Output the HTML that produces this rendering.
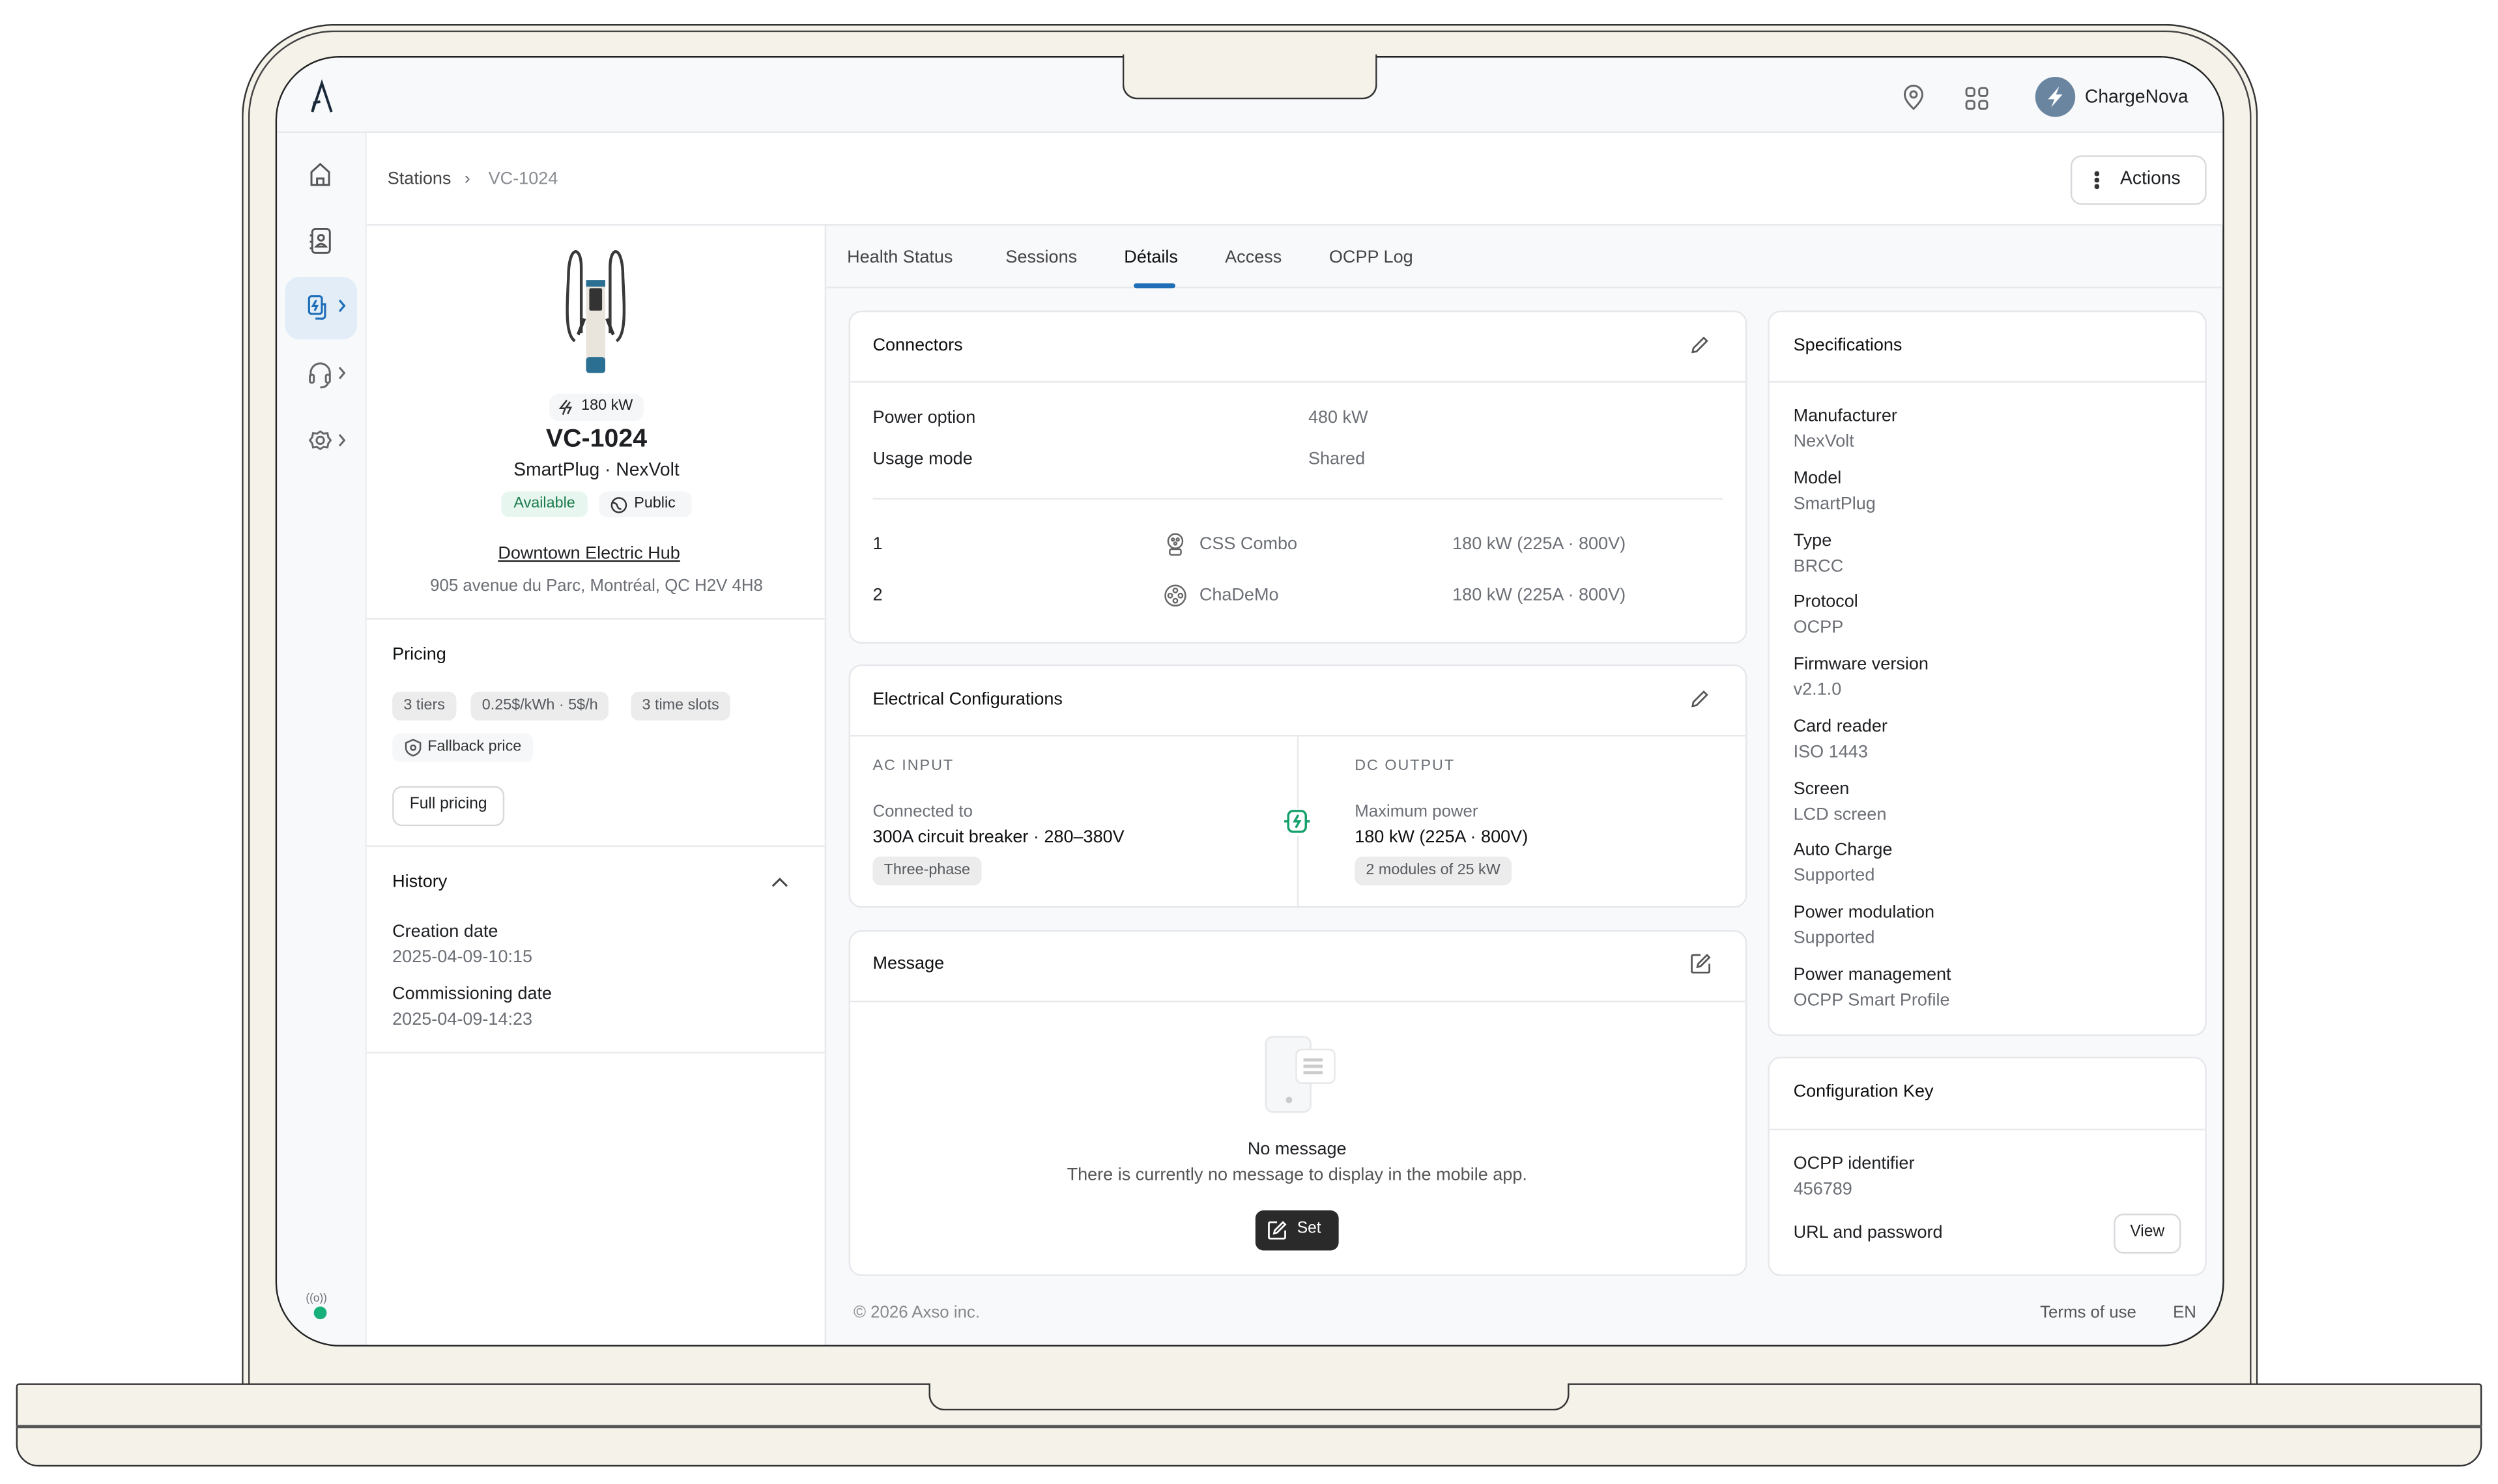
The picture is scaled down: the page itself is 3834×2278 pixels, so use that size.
<!DOCTYPE html>
<html><head><meta charset="utf-8"><style>
*{box-sizing:border-box;margin:0;padding:0}
html,body{width:3834px;height:2278px;background:#fff;overflow:hidden}
#c{position:absolute;left:0;top:0;width:1560px;height:927px;transform:scale(2.4577);transform-origin:0 0;font-family:"Liberation Sans",sans-serif;color:#1d1f22}
.a{position:absolute}
.t{position:absolute;white-space:nowrap;line-height:14px;font-size:11px}
.g{color:#6b6f75}
.m{font-weight:400;color:#0e0f11}
.card{position:absolute;background:#fff;border:1px solid #e6e7ea;border-radius:8px}
.hl{position:absolute;height:1px;background:#e8e9ec}
.vl{position:absolute;width:1px;background:#e8e9ec}
.chip{position:absolute;height:18px;line-height:18px;font-size:9.5px;padding:0 7px;border-radius:5px;background:#ececec;color:#55595e;white-space:nowrap}
svg{position:absolute;overflow:visible}
</style></head><body><div id="c">
<div class="a" style="left:151px;top:15px;width:1259px;height:860px;background:#f5f2ea;border:1.3px solid #333;border-bottom:none;border-radius:58px 58px 0 0"></div>
<div class="a" style="left:155px;top:19px;width:1251px;height:856px;border:1px solid #444;border-bottom:none;border-radius:54px 54px 0 0"></div>
<div class="a" style="left:10px;top:864px;width:1540px;height:52px;background:#f5f2ea;border:1.2px solid #333;border-radius:2px 2px 14px 14px"></div>
<div class="a" style="left:10px;top:890px;width:1540px;height:1.5px;background:#555"></div>
<div class="a" style="left:580px;top:864px;width:400px;height:17px;border:1px solid #333;border-top:none;border-radius:0 0 10px 10px;background:#f5f2ea"></div>
<div class="a" style="left:172px;top:35px;width:1217px;height:806px;border:1.2px solid #222;border-radius:40px;overflow:hidden;background:#f8f9fb">
 <div class="a" style="left:0;top:0;width:1217px;height:806px;transform:translate(-172px,-35px)">
  <div class="a" style="left:172px;top:35px;width:1217px;height:47px;background:#f8f9fb;border-bottom:1px solid #e8e9ec"></div>
  <svg style="left:192px;top:49px" width="16" height="22" viewBox="0 0 16 22"><path d="M2 20 L8 2 L14 20 M2 20 L3.5 14 L7 13.5" fill="none" stroke="#1b2a3a" stroke-width="1.6"/></svg>
  <svg style="left:1187px;top:52px" width="14" height="16" viewBox="0 0 14 16"><path d="M7 15 C3 11 1.5 8.5 1.5 6 A5.5 5.5 0 0 1 12.5 6 C12.5 8.5 11 11 7 15Z" fill="none" stroke="#666" stroke-width="1.2"/><circle cx="7" cy="6" r="2" fill="none" stroke="#666" stroke-width="1.2"/></svg>
  <svg style="left:1226px;top:53px" width="15" height="15" viewBox="0 0 15 15" fill="none" stroke="#666" stroke-width="1.2"><rect x="1" y="1" width="5" height="5" rx="1.5"/><rect x="9" y="1" width="5" height="5" rx="1.5"/><rect x="1" y="9" width="5" height="5" rx="1.5"/><rect x="9" y="9" width="5" height="5" rx="1.5"/></svg>
  <div class="a" style="left:1270px;top:47px;width:25px;height:25px;border-radius:50%;background:#6a85a0"></div>
  <svg style="left:1274px;top:51px" width="17" height="17" viewBox="0 0 17 17"><path d="M11 2 L4 10 L8 10 L6 15 L13 7 L9 7 Z" fill="#fff"/></svg>
  <div class="t" style="left:1301px;top:53px;font-size:11.5px">ChargeNova</div>
  <div class="a" style="left:172px;top:82px;width:56px;height:760px;background:#f8f9fb;border-right:1px solid #eceef0"></div>
  <svg style="left:192px;top:100px" width="14" height="16" viewBox="0 0 14 16" fill="none" stroke="#555" stroke-width="1.2"><path d="M1.5 14.5 V6.5 L7 1.5 L12.5 6.5 V14.5 Z"/><path d="M5 14.5 V10.5 H9 V14.5"/></svg>
  <svg style="left:192px;top:141px" width="14" height="17" viewBox="0 0 14 17" fill="none" stroke="#555" stroke-width="1.2"><rect x="2" y="1" width="11" height="15" rx="2"/><circle cx="7.5" cy="6.5" r="1.8"/><path d="M4.5 12 Q7.5 8.5 10.5 12Z"/><path d="M0.5 5h2M0.5 9h2M0.5 13h2"/></svg>
  <div class="a" style="left:177px;top:172px;width:45px;height:39px;border-radius:9px;background:#e3edf8"></div>
  <svg style="left:191px;top:183px" width="28" height="17" viewBox="0 0 28 17" fill="none" stroke="#1f6fb8" stroke-width="1.3"><rect x="1" y="1" width="8" height="11" rx="1.5"/><path d="M5.5 3.5 L3.5 7 H6 L4.5 10"/><path d="M9 6 H11 V13 Q11 15.5 8 15 H5"/><path d="M20 3.5 L23 7 L20 10.5"/></svg>
  <svg style="left:191px;top:225px" width="28" height="17" viewBox="0 0 28 17" fill="none" stroke="#666" stroke-width="1.2"><path d="M2 9 V7 A6 6 0 0 1 14 7 V9"/><rect x="1.5" y="8" width="2.5" height="5" rx="1"/><rect x="11.5" y="8" width="2.5" height="5" rx="1"/><path d="M13 13 Q12 16 8 16"/><path d="M20 3.5 L23 7 L20 10.5"/></svg>
  <svg style="left:191px;top:267px" width="28" height="17" viewBox="0 0 28 17" fill="none" stroke="#666" stroke-width="1.2"><path d="M8 1.5 L10 2.8 L12.5 2.5 L13 5 L14.5 7 L13 9 L12.5 11.5 L10 11.2 L8 12.5 L6 11.2 L3.5 11.5 L3 9 L1.5 7 L3 5 L3.5 2.5 L6 2.8Z"/><circle cx="8" cy="7" r="2.3"/><path d="M20 3.5 L23 7 L20 10.5"/></svg>
  <div class="t g" style="left:190px;top:804px;font-size:7px">((o))</div>
  <div class="a" style="left:195px;top:815px;width:8px;height:8px;border-radius:50%;background:#17b07a"></div>
  <div class="a" style="left:228px;top:82px;width:1161px;height:58px;background:#fff;border-bottom:1px solid #e8e9ec"></div>
  <div class="t" style="left:241px;top:104px;color:#444">Stations</div>
  <div class="t g" style="left:289px;top:104px">›</div>
  <div class="t" style="left:304px;top:104px;color:#8a8d92">VC-1024</div>
  <div class="a" style="left:1292px;top:96px;width:85px;height:31px;border:1px solid #d8d9dc;border-radius:7px;background:#fff"></div>
  <div class="a" style="left:1307px;top:106px;width:2.5px;height:2.5px;border-radius:50%;background:#333;box-shadow:0 4px 0 #333,0 8px 0 #333"></div>
  <div class="t" style="left:1323px;top:104px;font-size:11.5px">Actions</div>
  <div class="a" style="left:228px;top:140px;width:287px;height:702px;background:#fff;border-right:1px solid #e8e9ec"></div>
  <svg style="left:350px;top:152px" width="42" height="82" viewBox="0 0 42 82"><path d="M8 60 C2 56 3 40 4 20 C4 0 12 0 12 14 L12 55" fill="none" stroke="#3a3a3a" stroke-width="1.8"/><path d="M34 60 C40 56 39 40 38 20 C38 0 30 0 30 14 L30 55" fill="none" stroke="#3a3a3a" stroke-width="1.8"/><rect x="15" y="22" width="12" height="55" rx="3" fill="#e9e4dc"/><rect x="15" y="22" width="12" height="4" fill="#2b6f93"/><rect x="17" y="27" width="8" height="14" rx="1" fill="#333"/><rect x="15" y="70" width="12" height="10" rx="2" fill="#2b6f93"/><path d="M14 46 L10 56 M28 46 L32 56" stroke="#333" stroke-width="2"/></svg>
  <div class="a" style="left:342px;top:245px;width:59px;height:17px;border-radius:6px;background:#f5f6f8"></div>
  <svg style="left:347px;top:248px" width="11" height="11" viewBox="0 0 11 11" fill="none" stroke="#333" stroke-width="1"><path d="M6 1 L2 6 H5 L3.5 10 M8 2 L5.5 5.5 H8.5 L6.5 9.5"/></svg>
  <div class="t" style="left:362px;top:246px;font-size:9.5px">180 kW</div>
  <div class="t" style="left:300px;top:265px;width:143px;text-align:center;font-size:16px;line-height:18px;font-weight:600">VC-1024</div>
  <div class="t" style="left:290px;top:286px;width:163px;text-align:center;font-size:11.5px">SmartPlug · NexVolt</div>
  <div class="a" style="left:312px;top:306px;width:54px;height:16px;border-radius:5px;background:#e7f7ef"></div>
  <div class="t" style="left:312px;top:307px;width:54px;text-align:center;font-size:9.5px;color:#1a7a4a">Available</div>
  <div class="a" style="left:373px;top:306px;width:58px;height:16px;border-radius:5px;background:#f5f6f8"></div>
  <svg style="left:380px;top:309px" width="11" height="11" viewBox="0 0 11 11" fill="none" stroke="#333" stroke-width="1"><circle cx="5.5" cy="5.5" r="4.5"/><path d="M1.5 4 Q4 4 4.5 6 Q5 8 7 8"/></svg>
  <div class="t" style="left:395px;top:307px;font-size:9.5px">Public</div>
  <div class="t" style="left:310px;top:338px;font-size:11px;text-decoration:underline">Downtown Electric Hub</div>
  <div class="t g" style="left:250px;top:358px;width:243px;text-align:center;font-size:10.5px">905 avenue du Parc, Montréal, QC H2V 4H8</div>
  <div class="hl" style="left:228px;top:385px;width:287px"></div>
  <div class="t m" style="left:244px;top:401px;font-size:11px">Pricing</div>
  <div class="chip" style="left:244px;top:431px">3 tiers</div>
  <div class="chip" style="left:293px;top:431px">0.25$/kWh · 5$/h</div>
  <div class="chip" style="left:393px;top:431px">3 time slots</div>
  <div class="chip" style="left:244px;top:457px;background:#f6f7f8;color:#333;padding-left:22px">Fallback price</div>
  <svg style="left:251px;top:460px" width="12" height="12" viewBox="0 0 12 12" fill="none" stroke="#555" stroke-width="1"><path d="M6 1 L10.5 3 V6 Q10.5 9.5 6 11 Q1.5 9.5 1.5 6 V3Z"/><circle cx="6" cy="6" r="1.5"/></svg>
  <div class="a" style="left:244px;top:490px;width:70px;height:25px;border:1px solid #d8d9dc;border-radius:6px"></div>
  <div class="t" style="left:244px;top:495px;width:70px;text-align:center;font-size:10px">Full pricing</div>
  <div class="hl" style="left:228px;top:527px;width:287px"></div>
  <div class="t m" style="left:244px;top:543px;font-size:11px">History</div>
  <svg style="left:480px;top:546px" width="12" height="8" viewBox="0 0 12 8"><path d="M1.5 6.5 L6 2 L10.5 6.5" fill="none" stroke="#444" stroke-width="1.2"/></svg>
  <div class="t" style="left:244px;top:574px">Creation date</div>
  <div class="t g" style="left:244px;top:590px">2025-04-09-10:15</div>
  <div class="t" style="left:244px;top:613px">Commissioning date</div>
  <div class="t g" style="left:244px;top:629px">2025-04-09-14:23</div>
  <div class="hl" style="left:228px;top:656px;width:287px"></div>
  <div class="a" style="left:515px;top:178px;width:874px;height:1px;background:#e8e9ec"></div>
  <div class="t" style="left:528px;top:153px;color:#444">Health Status</div>
  <div class="t" style="left:627px;top:153px;color:#444">Sessions</div>
  <div class="t m" style="left:701px;top:153px">Détails</div>
  <div class="a" style="left:707px;top:176px;width:26px;height:3px;border-radius:2px;background:#1f6fb8"></div>
  <div class="t" style="left:764px;top:153px;color:#444">Access</div>
  <div class="t" style="left:829px;top:153px;color:#444">OCPP Log</div>
  <div class="card" style="left:529px;top:193px;width:561px;height:208px"></div>
  <div class="t m" style="left:544px;top:208px">Connectors</div>
  <svg style="left:1054px;top:208px" width="13" height="13" viewBox="0 0 13 13" fill="none" stroke="#555" stroke-width="1.1"><path d="M2 11 L2.5 8.5 L9 2 L11 4 L4.5 10.5 Z"/></svg>
  <div class="hl" style="left:529px;top:237px;width:561px"></div>
  <div class="t" style="left:544px;top:253px">Power option</div><div class="t g" style="left:816px;top:253px">480 kW</div>
  <div class="t" style="left:544px;top:279px">Usage mode</div><div class="t g" style="left:816px;top:279px">Shared</div>
  <div class="hl" style="left:544px;top:310px;width:531px"></div>
  <div class="t" style="left:544px;top:332px">1</div>
  <svg style="left:727px;top:332px" width="12" height="14" viewBox="0 0 12 14" fill="none" stroke="#666" stroke-width="1"><circle cx="6" cy="5" r="4.5"/><rect x="2.5" y="10" width="7" height="3.5" rx="1"/><circle cx="4.5" cy="4" r=".8"/><circle cx="7.5" cy="4" r=".8"/><circle cx="6" cy="6.5" r=".8"/></svg>
  <div class="t g" style="left:748px;top:332px">CSS Combo</div><div class="t g" style="left:906px;top:332px">180 kW (225A · 800V)</div>
  <div class="t" style="left:544px;top:364px">2</div>
  <svg style="left:726px;top:364px" width="14" height="14" viewBox="0 0 14 14" fill="none" stroke="#666" stroke-width="1"><circle cx="7" cy="7" r="6.3"/><circle cx="7" cy="3.8" r="1.3"/><circle cx="7" cy="10.2" r="1.3"/><circle cx="3.8" cy="7" r="1.3"/><circle cx="10.2" cy="7" r="1.3"/></svg>
  <div class="t g" style="left:748px;top:364px">ChaDeMo</div><div class="t g" style="left:906px;top:364px">180 kW (225A · 800V)</div>
  <div class="card" style="left:529px;top:414px;width:561px;height:152px"></div>
  <div class="t m" style="left:544px;top:429px">Electrical Configurations</div>
  <svg style="left:1054px;top:429px" width="13" height="13" viewBox="0 0 13 13" fill="none" stroke="#555" stroke-width="1.1"><path d="M2 11 L2.5 8.5 L9 2 L11 4 L4.5 10.5 Z"/></svg>
  <div class="hl" style="left:529px;top:458px;width:561px"></div>
  <div class="vl" style="left:809px;top:459px;height:106px"></div>
  <div class="t g" style="left:544px;top:471px;font-size:9.5px;letter-spacing:.8px">AC INPUT</div>
  <div class="t g" style="left:845px;top:471px;font-size:9.5px;letter-spacing:.8px">DC OUTPUT</div>
  <div class="t g" style="left:544px;top:499px;font-size:10.5px">Connected to</div>
  <div class="t m" style="left:544px;top:515px">300A circuit breaker · 280–380V</div>
  <div class="chip" style="left:544px;top:534px;font-size:9.5px">Three-phase</div>
  <div class="t g" style="left:845px;top:499px;font-size:10.5px">Maximum power</div>
  <div class="t m" style="left:845px;top:515px">180 kW (225A · 800V)</div>
  <div class="chip" style="left:845px;top:534px;font-size:9.5px">2 modules of 25 kW</div>
  <div class="a" style="left:801px;top:504px;width:16px;height:17px;background:#fff"></div>
  <svg style="left:800px;top:503px" width="18" height="18" viewBox="0 0 18 18" fill="none" stroke="#13a06a" stroke-width="1.4"><rect x="3.5" y="2.5" width="11" height="13" rx="3"/><path d="M9.8 5 L7.5 9 H10.5 L8.2 13"/><path d="M1 9 H3.5 M14.5 9 H17"/></svg>
  <div class="card" style="left:529px;top:580px;width:561px;height:216px"></div>
  <div class="t m" style="left:544px;top:594px">Message</div>
  <svg style="left:1054px;top:594px" width="14" height="14" viewBox="0 0 14 14" fill="none" stroke="#555" stroke-width="1.1"><path d="M7 1.5 H2.5 Q1.5 1.5 1.5 2.5 V11.5 Q1.5 12.5 2.5 12.5 H11.5 Q12.5 12.5 12.5 11.5 V7"/><path d="M5 9 L5.5 7 L11 1.5 L12.5 3 L7 8.5 Z"/></svg>
  <div class="hl" style="left:529px;top:624px;width:561px"></div>
  <div class="a" style="left:789px;top:646px;width:29px;height:48px;border:1.5px solid #e6e7e9;border-radius:5px;background:#f6f7f8"></div>
  <div class="a" style="left:802px;top:684px;width:4px;height:4px;border-radius:50%;background:#c9cacc"></div>
  <div class="a" style="left:808px;top:654px;width:25px;height:22px;border:1.5px solid #e6e7e9;border-radius:4px;background:#fff"></div>
  <div class="a" style="left:813px;top:660px;width:12px;height:1.5px;background:#ccc;box-shadow:0 4px 0 #ccc,0 8px 0 #ccc"></div>
  <div class="t" style="left:729px;top:710px;width:160px;text-align:center;font-size:11px">No message</div>
  <div class="t g" style="left:609px;top:726px;width:400px;text-align:center;font-size:11px;color:#555">There is currently no message to display in the mobile app.</div>
  <div class="a" style="left:783px;top:755px;width:52px;height:25px;border-radius:5px;background:#2a2a2b"></div>
  <svg style="left:790px;top:761px" width="13" height="13" viewBox="0 0 14 14" fill="none" stroke="#fff" stroke-width="1.2"><path d="M7 1.5 H2.5 Q1.5 1.5 1.5 2.5 V11.5 Q1.5 12.5 2.5 12.5 H11.5 Q12.5 12.5 12.5 11.5 V7"/><path d="M5 9 L5.5 7 L11 1.5 L12.5 3 L7 8.5 Z"/></svg>
  <div class="t" style="left:809px;top:760px;color:#fff;font-size:10px">Set</div>
  <div class="card" style="left:1103px;top:193px;width:274px;height:453px"></div>
  <div class="t m" style="left:1119px;top:208px">Specifications</div>
  <div class="hl" style="left:1103px;top:237px;width:274px"></div>
  <div class="t" style="left:1119px;top:252px">Manufacturer</div><div class="t g" style="left:1119px;top:268px">NexVolt</div>
  <div class="t" style="left:1119px;top:291px">Model</div><div class="t g" style="left:1119px;top:307px">SmartPlug</div>
  <div class="t" style="left:1119px;top:330px">Type</div><div class="t g" style="left:1119px;top:346px">BRCC</div>
  <div class="t" style="left:1119px;top:368px">Protocol</div><div class="t g" style="left:1119px;top:384px">OCPP</div>
  <div class="t" style="left:1119px;top:407px">Firmware version</div><div class="t g" style="left:1119px;top:423px">v2.1.0</div>
  <div class="t" style="left:1119px;top:446px">Card reader</div><div class="t g" style="left:1119px;top:462px">ISO 1443</div>
  <div class="t" style="left:1119px;top:485px">Screen</div><div class="t g" style="left:1119px;top:501px">LCD screen</div>
  <div class="t" style="left:1119px;top:523px">Auto Charge</div><div class="t g" style="left:1119px;top:539px">Supported</div>
  <div class="t" style="left:1119px;top:562px">Power modulation</div><div class="t g" style="left:1119px;top:578px">Supported</div>
  <div class="t" style="left:1119px;top:601px">Power management</div><div class="t g" style="left:1119px;top:617px">OCPP Smart Profile</div>
  <div class="card" style="left:1103px;top:659px;width:274px;height:137px"></div>
  <div class="t m" style="left:1119px;top:674px">Configuration Key</div>
  <div class="hl" style="left:1103px;top:704px;width:274px"></div>
  <div class="t" style="left:1119px;top:719px">OCPP identifier</div><div class="t g" style="left:1119px;top:735px">456789</div>
  <div class="t" style="left:1119px;top:762px">URL and password</div>
  <div class="a" style="left:1319px;top:757px;width:42px;height:25px;border:1px solid #d8d9dc;border-radius:6px;background:#fff"></div>
  <div class="t" style="left:1319px;top:762px;width:42px;text-align:center;font-size:10px">View</div>
  <div class="t" style="left:532px;top:812px;font-size:10.5px;color:#888">© 2026 Axso inc.</div>
  <div class="t" style="left:1273px;top:812px;font-size:10.5px;color:#555">Terms of use</div>
  <div class="t" style="left:1356px;top:812px;font-size:10.5px;color:#555">EN</div>
 </div>
</div>
<div class="a" style="left:701px;top:34px;width:159px;height:28px;background:#f5f2ea;border:1.2px solid #333;border-top:none;border-radius:0 0 9px 9px"></div>
</div></body></html>
